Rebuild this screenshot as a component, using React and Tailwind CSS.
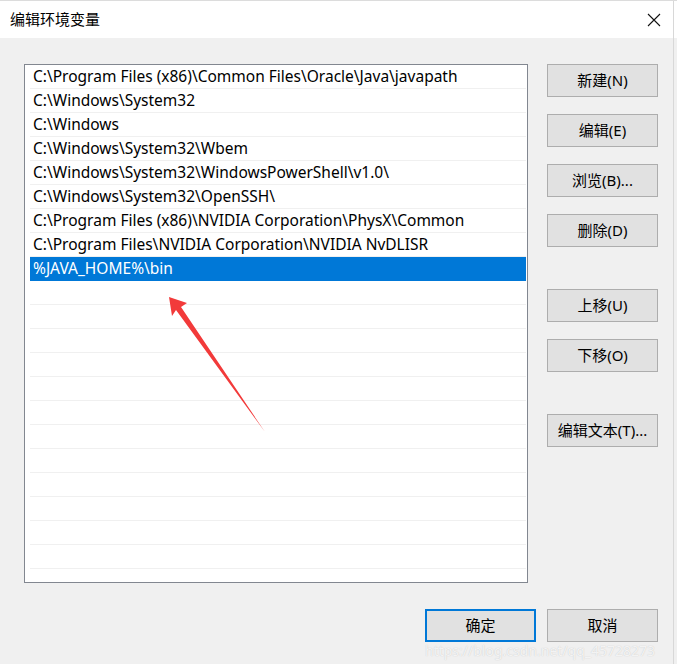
import React from 'react';

const paths = [
  'C:\\Program Files (x86)\\Common Files\\Oracle\\Java\\javapath',
  'C:\\Windows\\System32',
  'C:\\Windows',
  'C:\\Windows\\System32\\Wbem',
  'C:\\Windows\\System32\\WindowsPowerShell\\v1.0\\',
  'C:\\Windows\\System32\\OpenSSH\\',
  'C:\\Program Files (x86)\\NVIDIA Corporation\\PhysX\\Common',
  'C:\\Program Files\\NVIDIA Corporation\\NVIDIA NvDLISR',
  '%JAVA_HOME%\\bin',
];

const font = { fontFamily: '"Segoe UI", "Noto Sans", "Noto Sans CJK SC", sans-serif' };

function Btn({ children, primary }) {
  return (
    <button
      className={
        'w-[111px] h-[33px] flex items-center justify-center text-[15px] text-[#000] bg-[#e1e1e1] ' +
        (primary ? 'border-2 border-[#0078d7]' : 'border border-[#adadad]')
      }
    >
      {children}
    </button>
  );
}

export default function App() {
  const rows = [...paths, ...Array(14).fill('')];
  return (
    <div
      className="relative w-[677px] h-[664px] bg-[#f0f0f0] overflow-hidden flex flex-col border-t border-[#dcdcdc]"
      style={font}
    >
      <div className="h-[37px] bg-white flex items-center justify-between pl-[10px] pr-[14px] shrink-0">
        <span className="text-[15px] text-black">编辑环境变量</span>
        <svg width="14" height="14" viewBox="0 0 14 14" className="mr-[2px]">
          <path d="M1 1 L13 13 M13 1 L1 13" stroke="#111" strokeWidth="1.1" fill="none" />
        </svg>
      </div>

      <div className="flex pl-[24px] pt-[26px]">
        <div className="w-[504px] h-[519px] bg-white border border-[#828790] pl-[5px] pr-px overflow-hidden">
          {rows.map((t, i) => (
            <div
              key={i}
              className={
                'h-[24px] flex items-center pl-[3px] text-[15.5px] whitespace-nowrap ' +
                (i === 8 ? 'bg-[#0078d7] text-white' : 'text-black border-b border-[#f0f0f0]')
              }
            >
              {t}
            </div>
          ))}
        </div>

        <div className="ml-[19px] flex flex-col">
          <Btn>新建(N)</Btn>
          <div className="h-[17px]" />
          <Btn>编辑(E)</Btn>
          <div className="h-[17px]" />
          <Btn>浏览(B)...</Btn>
          <div className="h-[17px]" />
          <Btn>删除(D)</Btn>
          <div className="h-[42px]" />
          <Btn>上移(U)</Btn>
          <div className="h-[17px]" />
          <Btn>下移(O)</Btn>
          <div className="h-[42px]" />
          <Btn>编辑文本(T)...</Btn>
        </div>
      </div>

      <div className="flex pl-[425px] pt-[26px] gap-[11px]">
        <Btn primary>确定</Btn>
        <Btn>取消</Btn>
      </div>

      <div className="absolute right-[3px] top-0 bottom-0 w-px bg-[#d8d8d8]" />

      <svg className="absolute left-0 top-0 pointer-events-none" width="677" height="664">
        <polygon
          points="169,296 187,302 181,306 265,431 176,309 172,315"
          fill="#f23a3a"
        />
      </svg>

      <div className="absolute left-[425px] top-[639px] text-[14px] text-white/80 [text-shadow:0_0_1px_#bbb] whitespace-nowrap">
        https://blog.csdn.net/qq_45728273
      </div>
    </div>
  );
}
